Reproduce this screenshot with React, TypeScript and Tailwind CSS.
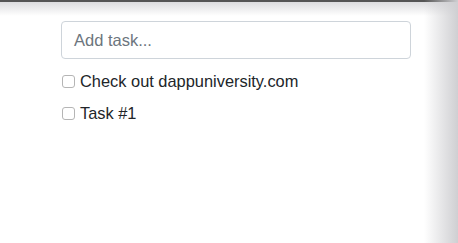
import React from "react";

export default function App() {
  return (
    <div
      className="relative w-[458px] h-[243px] overflow-hidden bg-white"
      style={{ fontFamily: '"Liberation Sans", Arial, sans-serif' }}
    >
      <div className="pl-[61px] pt-[21px] w-[411px]">
        <div className="h-[38px] w-[350px] rounded-[4px] border border-[#ced4da] flex items-center px-[12px] text-[16.5px] text-[#6c757d]">
          Add task...
        </div>
        <div className="mt-[15px] flex flex-col gap-[18px]">
          <div className="flex items-center gap-[5px] h-[14px]">
            <span className="w-[13px] h-[13px] rounded-[3px] border border-[#b5b5b5] bg-white ml-[1px]" />
            <span className="text-[16.4px] text-[#212529] leading-none">Check out dappuniversity.com</span>
          </div>
          <div className="flex items-center gap-[5px] h-[14px]">
            <span className="w-[13px] h-[13px] rounded-[3px] border border-[#b5b5b5] bg-white ml-[1px]" />
            <span className="text-[16.4px] text-[#212529] leading-none">Task #1</span>
          </div>
        </div>
      </div>
      <div className="absolute top-0 left-0 right-0 h-[2px] bg-[#555]" />
      <div className="absolute top-[2px] left-0 right-0 h-[14px] bg-gradient-to-b from-[#dcdcdf] to-transparent" />
      <div className="absolute top-0 bottom-0 right-0 w-[34px] bg-gradient-to-r from-transparent to-[#cfcfd2]" />
    </div>
  );
}
